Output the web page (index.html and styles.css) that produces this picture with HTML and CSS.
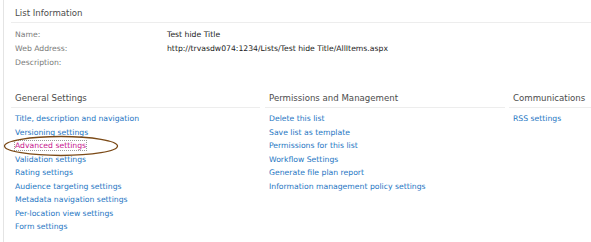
FILE: index.html
```html
<!DOCTYPE html>
<html lang="en">
<head>
    <meta charset="UTF-8">
    <title>List Settings</title>
    <link rel="stylesheet" href="styles.css">
</head>
<body>
    <div class="page">
        <div class="section">
            <h3 class="section-title">List Information</h3>
            <div class="info-row">
                <span class="info-label">Name:</span>
                <span class="info-value">Test hide Title</span>
            </div>
            <div class="info-row">
                <span class="info-label">Web Address:</span>
                <span class="info-value">http://trvasdw074:1234/Lists/Test hide Title/AllItems.aspx</span>
            </div>
            <div class="info-row">
                <span class="info-label">Description:</span>
                <span class="info-value"></span>
            </div>
        </div>

        <div class="settings">
            <div class="col col-general">
                <h3 class="section-title">General Settings</h3>
                <ul class="links">
                    <li><a href="#">Title, description and navigation</a></li>
                    <li><a href="#">Versioning settings</a></li>
                    <li class="marked">
                        <a href="#" class="active">Advanced settings</a>
                        <svg class="ring" width="118" height="24" viewBox="0 0 118 24">
                            <ellipse cx="58" cy="12" rx="56.5" ry="9.5" fill="none" stroke="#7b4a17" stroke-width="1.3"/>
                        </svg>
                    </li>
                    <li><a href="#">Validation settings</a></li>
                    <li><a href="#">Rating settings</a></li>
                    <li><a href="#">Audience targeting settings</a></li>
                    <li><a href="#">Metadata navigation settings</a></li>
                    <li><a href="#">Per-location view settings</a></li>
                    <li><a href="#">Form settings</a></li>
                </ul>
            </div>
            <div class="col col-perm">
                <h3 class="section-title">Permissions and Management</h3>
                <ul class="links">
                    <li><a href="#">Delete this list</a></li>
                    <li><a href="#">Save list as template</a></li>
                    <li><a href="#">Permissions for this list</a></li>
                    <li><a href="#">Workflow Settings</a></li>
                    <li><a href="#">Generate file plan report</a></li>
                    <li><a href="#">Information management policy settings</a></li>
                </ul>
            </div>
            <div class="col col-comm">
                <h3 class="section-title">Communications</h3>
                <ul class="links">
                    <li><a href="#">RSS settings</a></li>
                </ul>
            </div>
        </div>
    </div>
</body>
</html>
```

FILE: styles.css
```css
body {
    margin: 0;
    background-color: #fff;
    font-family: "DejaVu Sans", Verdana, sans-serif;
    font-size: 7.7px;
    color: #333;
    overflow: hidden;
}

.page {
    margin-left: 3px;
    border-left: 1px solid #e4e4e4;
    height: 242px;
    padding-left: 7px;
}

.section-title {
    margin: 0;
    font-weight: normal;
    font-size: 8.6px;
    color: #4c4c4c;
    padding: 0 0 4px 4px;
    border-bottom: 1px solid #ededed;
}

.section {
    padding-top: 8px;
}

.info-row {
    display: flex;
    height: 14px;
    line-height: 14px;
    padding-left: 4px;
}

.info-row:first-of-type {
    margin-top: 5px;
}

.info-label {
    width: 152px;
    color: #7a7a7a;
}

.info-value {
    color: #222;
}

.settings {
    display: flex;
    margin-top: 23px;
}

.col-general {
    width: 249px;
    margin-right: 5px;
}

.col-perm {
    width: 240px;
    margin-right: 4px;
}

.col-comm {
    flex: 1;
}

.links {
    list-style: none;
    margin: 4px 0 0 0;
    padding: 0 0 0 4px;
}

.links li {
    height: 13.5px;
    line-height: 13.5px;
}

.links a {
    color: #2576c3;
    text-decoration: none;
}

.marked {
    position: relative;
}

.links a.active {
    color: #c8168e;
    outline: 1px dotted #9a9a9a;
}

.ring {
    position: absolute;
    left: -12px;
    top: -5px;
}
```
